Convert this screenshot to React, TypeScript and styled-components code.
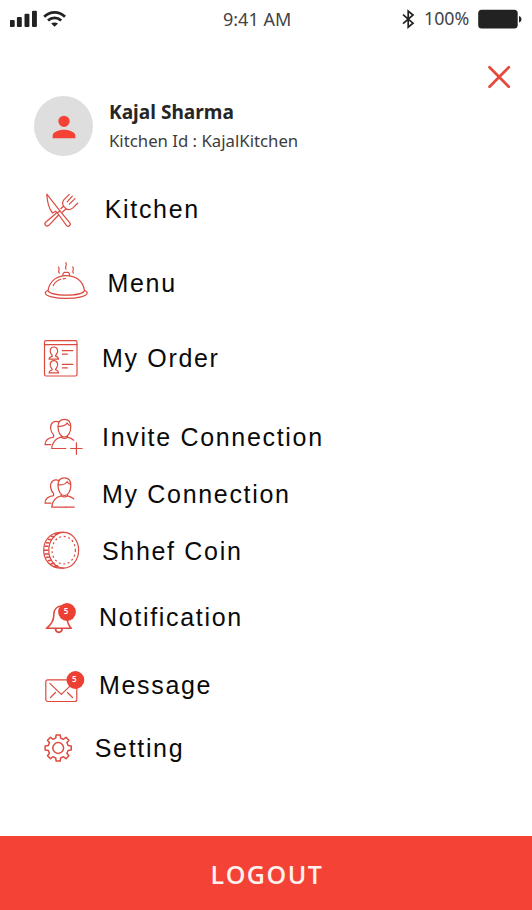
import React from 'react';
import styled, { createGlobalStyle } from 'styled-components';

const GlobalStyle = createGlobalStyle`
  * { box-sizing: border-box; }
  html, body { margin: 0; padding: 0; background: #fff; }
`;

const humanist = `'Noto Sans', 'Open Sans', sans-serif`;
const red = '#dc4a3f';
const solidRed = '#ee4032';

const Screen = styled.main`
  display: flex;
  flex-direction: column;
  width: 532px;
  height: 910px;
  overflow: hidden;
  background: #fff;
`;

const StatusBar = styled.header`
  display: grid;
  grid-template-columns: 213px 106px 1fr;
  height: 38px;
  padding: 0 9px 0 10px;
  font: 400 18px/38px ${humanist};
  color: #222;
`;

const StatusGroup = styled.div<{ $end?: boolean }>`
  display: flex;
  align-items: center;
  justify-content: ${p => (p.$end ? 'flex-end' : 'flex-start')};
`;

const Clock = styled.time`
  white-space: nowrap;
  color: #444;
`;

const Percent = styled.span`
  width: 54px;
  padding-left: 1px;
  line-height: 36px;
  height: 38px;
  font-size: 17.8px;
  color: #444;
`;

const CloseRow = styled.div`
  display: flex;
  justify-content: flex-end;
  height: 52px;
  padding: 26px 20px 0 0;
`;

const CloseButton = styled.button`
  display: block;
  width: 26px;
  height: 26px;
  padding: 0;
  border: 0;
  background: none;
`;

const Profile = styled.section`
  display: flex;
  height: 72px;
  padding: 6px 0 0 34px;
`;

const Avatar = styled.div`
  display: flex;
  align-items: center;
  justify-content: center;
  width: 59px;
  height: 60px;
  padding: 2px 0 0 1px;
  border-radius: 50%;
  background: #dedede;
`;

const Identity = styled.div`
  margin-left: 16px;
  font-family: ${humanist};
  color: #262626;
`;

const Name = styled.h1`
  margin: 2px 0 0;
  font-size: 19.1px;
  font-weight: 700;
  line-height: 28px;
  white-space: nowrap;
`;

const KitchenId = styled.p`
  margin: 1px 0 0;
  font-size: 16.75px;
  line-height: 28px;
  color: #3d3d3d;
  white-space: nowrap;
`;

const Menu = styled.nav`
  flex: 1;
  padding: 22px 0 0 40px;
`;

const MenuRow = styled.a<{ $gap: number }>`
  display: flex;
  align-items: center;
  height: 50px;
  margin-bottom: ${p => p.$gap}px;
  color: #0a0a0a;
  text-decoration: none;
`;

const Icon = styled.svg`
  flex: none;
  width: 50px;
  height: 50px;
  fill: none;
  stroke: ${red};
  stroke-width: 1.2;
  stroke-linecap: round;
  stroke-linejoin: round;
`;

const Label = styled.span<{ $indent: number }>`
  margin-left: ${p => p.$indent}px;
  font: 400 25px/28px 'Liberation Sans', Arial, sans-serif;
  letter-spacing: 1.68px;
  white-space: nowrap;
`;

const BadgeText = styled.text`
  font: 600 8px ${humanist};
  fill: #fff;
  stroke: none;
  text-anchor: middle;
`;

const Logout = styled.button`
  height: 74px;
  padding: 2px 0 0 2px;
  border: 0;
  background: #f44336;
  color: #fff1ee;
  font: 600 25px/72px 'Open Sans', sans-serif;
  letter-spacing: 1.5px;
`;

const KitchenIcon = () => (
  <Icon viewBox="0 0 50 50">
    <path d="M6.8 10.2C7.2 18 9.2 25 12.5 29l3.2-1.8 1.7 1.9 2.5-2.3L6.8 10.2Z" />
    <path d="m17.4 29 9 12.3c2.2 2.3 5.1-.4 3.2-2.6L19.9 26.8" />
    <path d="m16.2 29.2-10.6 9c-2 2.4.8 5.1 3.2 3.1L18.6 31M20.8 24.7l2.6-2.4m2.6 2.4-3.4 3.3" />
    <path d="m29.2 10.4-5.2 5.3c-1.5 2-1.7 4.7-.4 6.5l2.4 2.5c2.3 1.4 4.8.8 6.6-.6l5.1-4.8M32.3 12.2l-5.2 5.6M35 14.6l-5.6 5.5" />
  </Icon>
);

const DishIcon = () => (
  <Icon viewBox="0 0 50 50">
    <path d="M8 32.5C9.6 22.7 17.2 17.6 26.3 17.6s16.6 5 18.2 14.9M8 32.5c-2 .5-2.7 1.2-2.7 2.4 0 3.2 9.6 5.5 21 5.5s20.9-2.3 20.9-5.5c0-1.2-.8-1.9-2.7-2.4" />
    <path d="M8 32.5c1.1 2.9 9 4.7 18.3 4.7s17.2-1.8 18.2-4.7M23 17.6v-2l1.2-1.2h4l1.2 1.2v2" />
    <path d="M13.3 27.5c1.6-3.2 4.1-5.2 7.4-6.2m2.4-.5 2.5-.3M19.3 15c-2.1-1.8 1.3-3.2-.9-6M26 11.2c-1.9-2.2 1.6-4-.1-6.5M33.3 15c-1.8-2.2 1.5-3.6-.5-6" />
  </Icon>
);

const OrderPerson = ({ y }: { y: number }) => (
  <g transform={`translate(0 ${y})`}>
    <path d="M11 7.2C9.5 5 9.8.5 13.9.5s4.4 4.5 2.9 6.7c-.8 1.2-1.2 1.6-1.3 2.4 2 .6 3 1.3 3 3.1H9.1c0-1.8 1.2-2.5 3.2-3.1-.1-.8-.5-1.2-1.3-2.4Z" />
    <path d="M22.3 4.2h10.5M22.3 7.7h5" />
  </g>
);

const OrderIcon = () => (
  <Icon viewBox="0 0 50 50">
    <rect x="4.5" y="7.7" width="32.5" height="35.3" rx="1.5" />
    <path d="M4.5 11.6H37" />
    <OrderPerson y={13.5} />
    <OrderPerson y={27.2} />
  </Icon>
);

const PeopleIcon = ({ plus }: { plus?: boolean }) => (
  <Icon viewBox={plus ? '0 1.2 50 50' : '0 -0.4 50 50'}>
    <path d="M18 16c0-4.8 2.5-7.5 6.4-7.5s6.4 2.7 6.4 7.5c0 6-3.1 10.2-6.4 10.2S18 22 18 16Z" />
    <path d="M18.2 15.5c4.2.3 7.4-1 9-3.4.8 1.6 1.8 2.6 3.4 3" />
    <path d="M19 11.1c-5-2-8.9 1.3-8.4 6.4.3 3.3 1.2 5.1 3 6.5v2.3C7.8 27 5.2 29.6 5 33.8h5.8" />
    <path d="M21.2 25.2v1.2c-5.3 1.2-8.8 3.7-9.5 11.3h14.2M21.2 26.4c2.2 1.6 4.3 1.6 6.3 0M27.5 25.2v1.2c2.4.6 4.4 1.4 6.2 3" />
    <path d={plus ? 'M30.7 37.7h11.4M36.4 32v11.4' : 'M25.9 37.7h8.4'} />
  </Icon>
);

const CoinIcon = () => (
  <Icon viewBox="0 0 50 50">
    <ellipse cx="23.7" cy="24.2" rx="14.9" ry="17.9" />
    <path d="M23.7 6.3h-4C10.5 7 3.7 14 3.7 24.2S10.5 41.5 19.7 42.1h4" />
    <path d="M14.5 7.8l3.5.6M10.8 10.2l3.7.8M8 13.2l3.5.7M6 16.7l3.6.3M4.6 20.3h4M4 24.2h4.6M4.5 28h4.4M5.8 31.5l4.2-.5M7.7 34.8l4.1-.7M10.5 38l4-.9M14 40.4l4.2-.6" strokeWidth={1.6} strokeLinecap="butt" />
    <ellipse cx="23.7" cy="24.2" rx="11.7" ry="13.8" strokeDasharray="2 2.6" strokeLinecap="butt" />
  </Icon>
);

const Badge = ({ x, y }: { x: number; y: number }) => (
  <g>
    <circle cx={x} cy={y} r="8.9" fill={solidRed} stroke="none" />
    <BadgeText x={x - 1} y={y + 2}>5</BadgeText>
  </g>
);

const BellIcon = () => (
  <Icon viewBox="0 0 50 50">
    <path d="M22 14c-4.8 0-8.1 3.2-8.1 8.3 0 6.7-2.1 10.2-7.5 14h24.9c-2.6-2.4-3.7-5.5-4-9" strokeWidth={1.6} />
    <path d="M15.5 37c.4 4.4 6.2 4.4 6.6 0" strokeWidth={1.8} />
    <Badge x={27} y={20} />
  </Icon>
);

const EnvelopeIcon = () => (
  <Icon viewBox="0 0 50 50">
    <rect x="5.8" y="19.8" width="31" height="21.7" rx="2" />
    <path d="m9.8 23.4 11.5 11 11.5-11M10.5 37.5l5-5M32.5 37.5l-5-5" />
    <Badge x={35.4} y={20} />
  </Icon>
);

const gearOutline = Array.from({ length: 8 }, (_, i) => {
  const corners: Array<[number, number]> = [[-14, 10.2], [-9, 13.2], [9, 13.2], [14, 10.2]];
  return corners.map(([offset, radius]) => {
    const angle = ((i * 45 + offset) * Math.PI) / 180;
    return `${(18.2 + radius * Math.cos(angle)).toFixed(2)},${(25 + radius * Math.sin(angle)).toFixed(2)}`;
  }).join(' ');
}).join(' ');

const GearIcon = () => (
  <Icon viewBox="0 0 50 50">
    <polygon points={gearOutline} strokeWidth={1.5} />
    <circle cx="18.2" cy="25" r="5.4" strokeWidth={1.5} />
  </Icon>
);

const items = [
  { label: 'Kitchen', icon: <KitchenIcon />, indent: 14.7, gap: 24 },
  { label: 'Menu', icon: <DishIcon />, indent: 17.5, gap: 25 },
  { label: 'My Order', icon: <OrderIcon />, indent: 12, gap: 29 },
  { label: 'Invite Connection', icon: <PeopleIcon plus />, indent: 12, gap: 7 },
  { label: 'My Connection', icon: <PeopleIcon />, indent: 12, gap: 7 },
  { label: 'Shhef Coin', icon: <CoinIcon />, indent: 12, gap: 16 },
  { label: 'Notification', icon: <BellIcon />, indent: 9, gap: 18 },
  { label: 'Message', icon: <EnvelopeIcon />, indent: 9, gap: 13 },
  { label: 'Setting', icon: <GearIcon />, indent: 4.7, gap: 0 },
];

export default function App() {
  return (
    <Screen>
      <GlobalStyle />
      <StatusBar>
        <StatusGroup>
          <svg width="58" height="38" viewBox="10 0 58 38" fill="#222">
            <rect x="9.8" y="20" width="4.9" height="7" rx="1" />
            <rect x="16.9" y="17" width="4.9" height="10" rx="1" />
            <rect x="24.5" y="13.8" width="4.9" height="13.2" rx="1" />
            <rect x="32" y="10.8" width="4.9" height="16.2" rx="1" />
            <path d="M44.2 16.7c6-5.9 14.8-5.9 20.8 0M48 20.6c3.8-3.6 9.4-3.6 13.2 0" fill="none" stroke="#222" strokeWidth="2.8" />
            <path d="M51.2 23.5c2-1.5 4.8-1.5 6.8 0l-3.4 3.2Z" />
          </svg>
        </StatusGroup>
        <Clock>9:41 AM</Clock>
        <StatusGroup $end>
          <svg width="22" height="38" viewBox="401 0 22 38" fill="none" stroke="#222" strokeWidth="1.7">
            <path d="m403 14.6 10 8.6-4.8 4V11l4.8 4-10 8.6" />
          </svg>
          <Percent>100%</Percent>
          <svg width="46" height="38" viewBox="477 0 46 38" fill="#222">
            <rect x="478.2" y="9.8" width="39.5" height="18.8" rx="3.5" />
            <path d="M519 16c3.3.8 3.3 5.8 0 6.6Z" />
          </svg>
        </StatusGroup>
      </StatusBar>
      <CloseRow>
        <CloseButton aria-label="Close">
          <svg width="26" height="26" viewBox="0 0 26 26" stroke="#e54a3d" strokeWidth="2.7" strokeLinecap="round">
            <path d="M3.5 3.3 22.8 22.8M22.8 3.3 3.5 22.8" />
          </svg>
        </CloseButton>
      </CloseRow>
      <Profile>
        <Avatar>
          <svg width="34" height="34" viewBox="0 0 24 24" fill="#f44336">
            <path d="M12 12a4 4 0 1 0 0-8 4 4 0 0 0 0 8Zm0 2c-2.7 0-8 1.3-8 4v2h16v-2c0-2.7-5.3-4-8-4Z" />
          </svg>
        </Avatar>
        <Identity>
          <Name>Kajal Sharma</Name>
          <KitchenId>Kitchen Id : KajalKitchen</KitchenId>
        </Identity>
      </Profile>
      <Menu>
        {items.map(item => (
          <MenuRow key={item.label} $gap={item.gap}>
            {item.icon}
            <Label $indent={item.indent}>{item.label}</Label>
          </MenuRow>
        ))}
      </Menu>
      <Logout>LOGOUT</Logout>
    </Screen>
  );
}
